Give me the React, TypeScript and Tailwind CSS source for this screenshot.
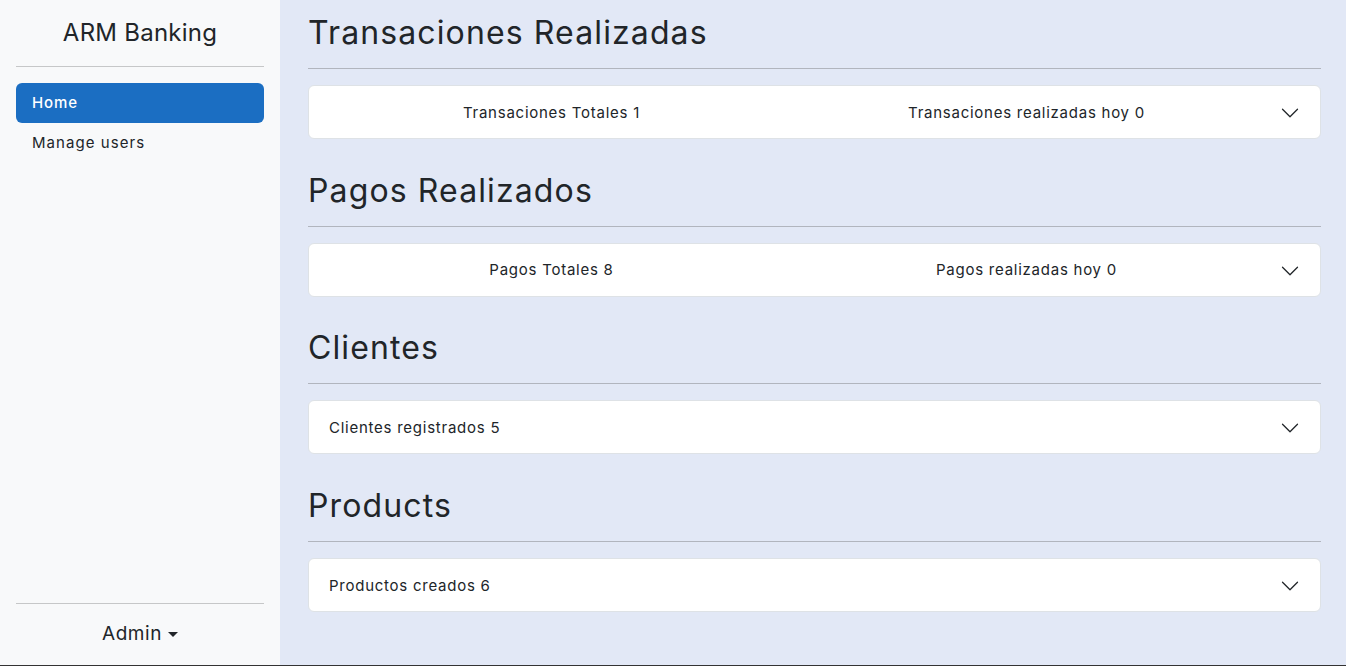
import React from 'react';

const FONT = { fontFamily: 'Inter, "Noto Sans", "Liberation Sans", sans-serif' };

function Chevron() {
  return (
    <svg className="w-5 h-5 shrink-0" viewBox="0 0 16 16" fill="none" stroke="#212529" strokeLinecap="round" strokeLinejoin="round">
      <path d="M2 5L8 11L14 5" />
    </svg>
  );
}

function StatCard({ items, centered }: { items: string[]; centered?: boolean }) {
  return (
    <div className="h-[54px] bg-white rounded-md border border-[#dee2e6] flex items-center px-5 pt-[2px]">
      {centered ? (
        <div className="flex-1 flex -ml-[15px] mr-4">
          {items.map((t) => (
            <div key={t} className="flex-1 text-center text-[15px] tracking-[0.05em] text-[#212529]">
              {t}
            </div>
          ))}
        </div>
      ) : (
        <div className="flex-1 text-[15px] tracking-[0.05em] text-[#212529]">{items[0]}</div>
      )}
      <Chevron />
    </div>
  );
}

function Section({ title, items, centered }: { title: string; items: string[]; centered?: boolean }) {
  return (
    <section>
      <h2 className="text-[32px] leading-[38px] tracking-[0.035em] text-[#212529]">{title}</h2>
      <hr className="mt-4 mb-4 border-t border-[#b1b5be]" />
      <StatCard items={items} centered={centered} />
    </section>
  );
}

export default function App() {
  return (
    <div className="h-[666px] flex border-b border-[#333] overflow-hidden" style={FONT}>
      {/* Sidebar */}
      <aside className="w-[280px] shrink-0 bg-[#f8f9fa] flex flex-col">
        <div className="h-[66px] flex items-center justify-center text-[24px] tracking-[0.01em] text-[#212529]">ARM Banking</div>
        <hr className="mx-4 border-t border-[#c6c7c8]" />
        <nav className="mt-4 px-4 flex flex-col">
          <a className="h-10 flex items-center px-4 rounded-md bg-[#1b6ec2] text-white text-[15px] tracking-[0.06em] font-medium">Home</a>
          <a className="h-10 flex items-center px-4 text-[15px] tracking-[0.07em] text-[#212529]">Manage users</a>
        </nav>
        <div className="flex-1" />
        <hr className="mx-4 border-t border-[#c6c7c8]" />
        <div className="h-[61px] flex items-center justify-center text-[19px] tracking-[0.03em] text-[#212529]">
          Admin
          <span className="ml-[6px] w-0 h-0 border-l-[5px] border-r-[5px] border-t-[5px] border-l-transparent border-r-transparent border-t-[#212529]" />
        </div>
      </aside>

      {/* Main */}
      <main className="flex-1 bg-[#e2e8f6] px-[28px] pr-[25px] pt-[14px] flex flex-col gap-[32.6px]">
        <Section title="Transaciones Realizadas" items={['Transaciones Totales 1', 'Transaciones realizadas hoy 0']} centered />
        <Section title="Pagos Realizados" items={['Pagos Totales 8', 'Pagos realizadas hoy 0']} centered />
        <Section title="Clientes" items={['Clientes registrados 5']} />
        <Section title="Products" items={['Productos creados 6']} />
      </main>
    </div>
  );
}
